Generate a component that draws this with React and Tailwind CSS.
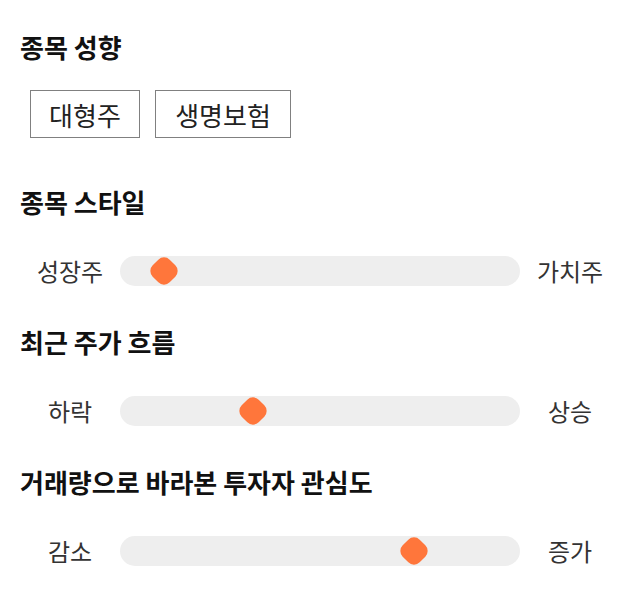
import React from "react";

const font = { fontFamily: '"Noto Sans CJK KR", "Noto Sans", sans-serif' };

function Slider({ left, right, pos }) {
  return (
    <div className="grid grid-cols-[100px_1fr_100px] items-center h-[30px]">
      <div className="text-center text-[24px] leading-[30px] text-[#333333]">{left}</div>
      <div className="relative h-[30px] rounded-full bg-[#eeeeee]">
        <div
          className="absolute top-[15px] w-[24px] h-[24px] rounded-[8px] bg-[#ff763b] rotate-45 -translate-x-1/2 -translate-y-1/2"
          style={{ left: pos }}
        />
      </div>
      <div className="text-center text-[24px] leading-[30px] text-[#333333]">{right}</div>
    </div>
  );
}

export default function App() {
  return (
    <div className="w-[640px] h-[606px] bg-white px-5 pt-[31px]" style={font}>
      <h2 className="text-[26px] font-bold leading-[32px] text-[#111111]">종목 성향</h2>
      <div className="flex gap-[15px] mt-[27px] ml-[10px]">
        <div className="w-[110px] h-[48px] border border-[#808080] flex items-center justify-center text-[26px] text-[#222222]">대형주</div>
        <div className="w-[136px] h-[48px] border border-[#808080] flex items-center justify-center text-[26px] text-[#222222]">생명보험</div>
      </div>
      <h2 className="mt-[48px] text-[26px] font-bold leading-[32px] text-[#111111]">종목 스타일</h2>
      <div className="mt-[38px]">
        <Slider left="성장주" right="가치주" pos="44px" />
      </div>
      <h2 className="mt-[40px] text-[26px] font-bold leading-[32px] text-[#111111]">최근 주가 흐름</h2>
      <div className="mt-[38px]">
        <Slider left="하락" right="상승" pos="133px" />
      </div>
      <h2 className="mt-[40px] text-[26px] font-bold leading-[32px] text-[#111111]">거래량으로 바라본 투자자 관심도</h2>
      <div className="mt-[38px]">
        <Slider left="감소" right="증가" pos="294px" />
      </div>
    </div>
  );
}
